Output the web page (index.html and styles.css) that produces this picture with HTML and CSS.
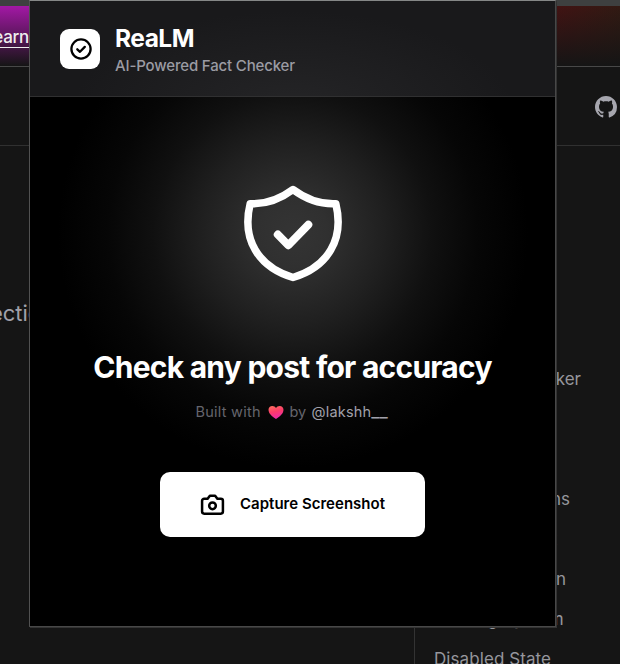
FILE: index.html
```html
<!DOCTYPE html>
<html lang="en">
<head>
<meta charset="utf-8">
<title>ReaLM</title>
<link rel="stylesheet" href="styles.css">
</head>
<body>
<div class="page">
  <div class="strip"></div>
  <div class="banner"><a class="banner-link">Learn</a></div>
  <div class="nav">
    <svg class="github" viewBox="0 0 16 16"><path fill="currentColor" d="M8 0C3.58 0 0 3.58 0 8c0 3.54 2.29 6.53 5.47 7.59.4.07.55-.17.55-.38 0-.19-.01-.82-.01-1.49-2.01.37-2.53-.49-2.69-.94-.09-.23-.48-.94-.82-1.13-.28-.15-.68-.52-.01-.53.63-.01 1.08.58 1.23.82.72 1.21 1.87.87 2.33.66.07-.52.28-.87.51-1.07-1.78-.2-3.64-.89-3.64-3.95 0-.87.31-1.59.82-2.15-.08-.2-.36-1.02.08-2.12 0 0 .67-.21 2.2.82.64-.18 1.32-.27 2-.27s1.36.09 2 .27c1.53-1.04 2.2-.82 2.2-.82.44 1.1.16 1.92.08 2.12.51.56.82 1.27.82 2.15 0 3.07-1.87 3.75-3.65 3.95.29.25.54.73.54 1.48 0 1.07-.01 1.93-.01 2.2 0 .21.15.46.55.38A8.01 8.01 0 0 0 16 8c0-4.42-3.58-8-8-8z"/></svg>
  </div>
  <div class="columns">
    <div class="article"><span class="lead">Section</span></div>
    <div class="toc">
      <span class="entry picker">Emoji Picker</span>
      <span class="entry options">Custom Icons</span>
      <span class="entry short">Font Start</span>
      <span class="entry icon">Custom Icon</span>
      <span class="entry rating">Rating System</span>
      <span class="entry disabled">Disabled State</span>
    </div>
  </div>
</div>

<div class="popup">
  <div class="head">
    <div class="logo">
      <svg viewBox="0 0 24 24"><circle cx="12" cy="12" r="9.6"/><path d="m8.3 12.3 2.7 2.5 4.8-4.9"/></svg>
    </div>
    <div class="titles">
      <span class="name">ReaLM</span>
      <span class="tagline">AI-Powered Fact Checker</span>
    </div>
  </div>
  <div class="main">
    <svg class="shield" viewBox="0 0 100 100">
      <path d="M50 5.500C38 14.500 25 20.500 7.200 19.700C-1.500 55 15 83 50 93.500C85 83 101.500 55 92.800 19.700C75 20.500 62 14.500 50 5.500Z"/>
      <path class="tick" d="m34.800 50.500 10.500 10.700 20-20.500"/>
    </svg>
    <div class="title">Check any post for accuracy</div>
    <div class="credit">
      <span class="built">Built with</span>
      <svg class="heart" viewBox="0 0 16 15">
        <defs><linearGradient id="heart-fill" x1="0" y1="0" x2="0.3" y2="1"><stop offset="0" stop-color="#ff745f"/><stop offset="0.5" stop-color="#fb3c68"/><stop offset="1" stop-color="#ed2aa5"/></linearGradient></defs>
        <path fill="url(#heart-fill)" d="M8 14C4 11.500 .5 8.500 .5 4.800C.5 2.300 2.200 1 4.300 1C6 1 7.300 1.800 8 3.100C8.700 1.800 10 1 11.700 1C13.800 1 15.500 2.300 15.500 4.800C15.500 8.500 12 11.500 8 14Z"/>
      </svg>
      <span class="by">by</span>
      <span class="handle">@lakshh<span class="tail">__</span></span>
    </div>
    <div class="capture">
      <svg class="camera" viewBox="0 0 24 24"><path d="M14.500 3.500h-5L7.300 6.500H4A2 2 0 0 0 2 8.500v10.300a2 2 0 0 0 2 2h16a2 2 0 0 0 2-2V8.500a2 2 0 0 0-2-2h-3.300z"/><circle cx="12" cy="13.300" r="3.200"/></svg>
      <span class="label">Capture Screenshot</span>
    </div>
  </div>
</div>
</body>
</html>
```
FILE: styles.css
```css
* { box-sizing: border-box; }
body {
  margin: 0;
  width: 620px;
  height: 664px;
  overflow: hidden;
  position: relative;
  background: #151515;
  font-family: Inter, "Liberation Sans", sans-serif;
  white-space: nowrap;
}
.page { height: 664px; display: flex; flex-direction: column; overflow: hidden; }
.strip { height: 6px; flex: none; background: #3e4040; }
.banner {
  height: 61px;
  flex: none;
  border-bottom: 1px solid #484848;
  background:
    linear-gradient(to bottom, transparent, #151515),
    linear-gradient(to right, #a318a5 0, #a318a5 30px, #421313 556px, #321a13 620px);
  display: flex;
}
.banner-link {
  width: 29px;
  display: flex;
  justify-content: flex-end;
  padding-top: 20px;
  font-size: 17px;
  line-height: 22px;
  font-weight: 500;
  letter-spacing: -0.300px;
  color: #eee;
  text-decoration: underline;
  text-underline-offset: 4px;
}
.nav {
  height: 79px;
  flex: none;
  border-bottom: 1px solid #303030;
  display: flex;
  align-items: center;
  justify-content: flex-end;
  padding-right: 3px;
}
.github { width: 22px; height: 22px; margin-top: 1px; color: #a6a6ae; }
.columns { flex: 1; display: flex; min-height: 0; }
.article { width: 414px; padding-top: 152px; }
.lead { display: flex; width: 54px; justify-content: flex-end; font-size: 22px; line-height: 30px; color: #a1a1aa; }
.toc {
  width: 206px;
  border-left: 1px solid #333;
  padding-top: 213px;
  display: flex;
  flex-direction: column;
  align-items: flex-start;
  font-size: 17px;
  color: #96969c;
}
.entry { height: 40px; line-height: 40px; flex: none; text-align: right; }
.picker { width: 166px; margin-bottom: 80px; }
.options { width: 155px; }
.short { width: 142px; }
.icon { width: 151px; }
.rating { width: 149px; letter-spacing: 0.25px; }
.disabled { padding-left: 19px; letter-spacing: 0.080px; }

.popup {
  position: absolute;
  left: 29px;
  top: 0;
  width: 527px;
  height: 627px;
  border: 1px solid #484848;
  border-top-color: #858787;
  border-left-color: #515151;
  box-shadow: 1px 1px 0 #333;
  background: radial-gradient(circle at 263px 232px, #343434 0, #303030 35px, #202020 90px, #101010 140px, #060606 185px, #000 235px);
  display: flex;
  flex-direction: column;
}
.head {
  height: 96px;
  flex: none;
  border-bottom: 1px solid #303031;
  background: radial-gradient(ellipse 220px 100px at 263px 110px, #252527, #19191b);
  display: flex;
  padding: 28px 0 0 30px;
  gap: 15px;
}
.logo { width: 40px; height: 40px; border-radius: 9px; background: #fff; display: flex; align-items: center; justify-content: center; }
.logo svg { width: 24px; height: 24px; fill: none; stroke: #000; stroke-width: 2.300; stroke-linecap: round; stroke-linejoin: round; margin: 0 0 1px 1px; }
.titles { display: flex; flex-direction: column; margin-top: -6px; }
.name { font-size: 24.500px; line-height: 30px; font-weight: 700; letter-spacing: -0.500px; color: #fff; }
.tagline { font-size: 15px; line-height: 20px; margin-top: 3px; font-weight: 500; color: #9b9ba3; letter-spacing: -0.160px; }
.main { flex: 1; display: flex; flex-direction: column; align-items: center; }
.shield { width: 100px; height: 100px; margin-top: 87px; fill: none; stroke: #fff; stroke-width: 7.500; stroke-linecap: round; stroke-linejoin: round; }
.tick { stroke-width: 8; }
.title { margin-top: 63px; height: 40px; line-height: 40px; font-size: 30px; font-weight: 700; letter-spacing: -0.750px; color: #fff; }
.credit { display: flex; align-items: center; margin-top: 15px; height: 20px; font-size: 14.500px; line-height: 20px; color: #65656d; width: 194px; }
.built { width: 72px; letter-spacing: 0.250px; }
.heart { width: 16px; height: 15px; flex: none; }
.by { margin-left: 6px; width: 22px; }
.handle { color: #a1a1aa; letter-spacing: 0.200px; }
.tail { font-size: 18px; line-height: 14px; letter-spacing: 0; }
.capture { margin-top: 50px; width: 265px; height: 65px; flex: none; border-radius: 10px; background: #fff; display: flex; align-items: center; padding-left: 40px; color: #000; }
.camera { width: 25px; height: 25px; fill: none; stroke: #000; stroke-width: 2.400; stroke-linecap: round; stroke-linejoin: round; }
.label { margin-left: 15px; margin-top: -2px; font-size: 15px; line-height: 20px; font-weight: 600; letter-spacing: 0.020px; }
```
